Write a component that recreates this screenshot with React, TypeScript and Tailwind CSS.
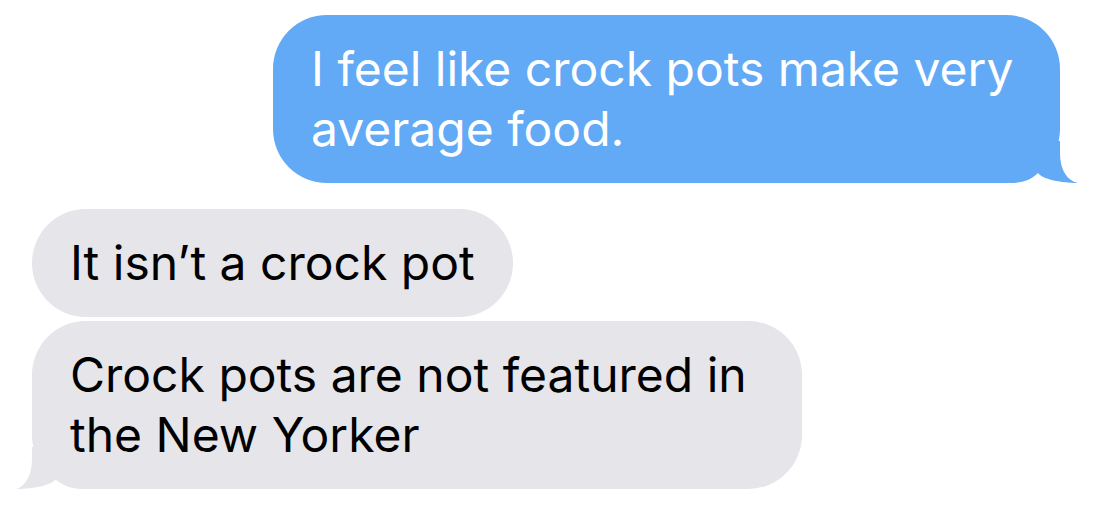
import { FC, ReactNode } from 'react';

const font = { fontFamily: 'Inter, "Noto Sans", sans-serif' };

// tail of the sent bubble, bottom-right
const BlueTail: FC = () => (
  <svg className="absolute right-[-18px] bottom-0" width="68" height="42" viewBox="0 0 68 42">
    <path d="M0 42 V0 H50 V12 C50 30 58 40 68 42 C58 42 34 40 28 32 C22 38 14 42 0 42 Z" fill="#62aaf5" />
  </svg>
);

// tail of the received bubble, bottom-left
const GrayTail: FC = () => (
  <svg className="absolute left-[-16px] bottom-0" width="68" height="42" viewBox="0 0 68 42">
    <path d="M68 42 V0 H16 V12 C16 30 8 40 0 42 C10 42 34 40 40 32 C46 38 54 42 68 42 Z" fill="#e5e5ea" />
  </svg>
);

const Bubble: FC<{ side: 'me' | 'them'; tail?: boolean; className?: string; children: ReactNode }> = ({
  side,
  tail,
  className,
  children,
}) => {
  const colors = side === 'me' ? 'bg-[#62aaf5] text-white' : 'bg-[#e5e5ea] text-black';
  return (
    <div className={`relative rounded-[54px] px-[38px] py-[24px] text-[48px] leading-[60px] ${colors} ${className ?? ''}`}>
      {tail && (side === 'me' ? <BlueTail /> : <GrayTail />)}
      <div className="relative">{children}</div>
    </div>
  );
};

export default function App() {
  return (
    <div className="w-[1104px] h-[506px] bg-white overflow-hidden flex flex-col" style={font}>
      <div className="flex justify-end pr-[44px] pt-[15px]">
        <Bubble side="me" tail className="w-[787px]">
          I feel like crock pots make very average food.
        </Bubble>
      </div>
      <div className="flex flex-col items-start gap-[4px] pl-[32px] mt-[26px]">
        <Bubble side="them">It isn’t a crock pot</Bubble>
        <Bubble side="them" tail className="w-[770px]">
          Crock pots are not featured in the New Yorker
        </Bubble>
      </div>
    </div>
  );
}
